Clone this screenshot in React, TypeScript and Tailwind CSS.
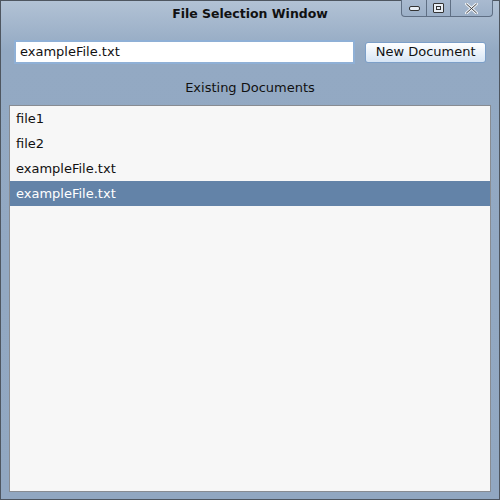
import React from 'react';

const files = ['file1', 'file2', 'exampleFile.txt', 'exampleFile.txt'];

export default function App() {
  const selected = 3;
  return (
    <div className="w-[500px] h-[500px] overflow-hidden" style={{ fontFamily: '"DejaVu Sans", Verdana, sans-serif' }}>
      <div className="w-full h-full flex flex-col border border-[#4e5660] bg-gradient-to-b from-[#b2c2d5] from-0% via-[#93a9c3] via-[10%] to-[#91a7c1]">
        {/* title bar */}
        <div className="relative h-[26px] flex items-center justify-center">
          <span className="text-[12.5px] font-bold text-[#111]">File Selection Window</span>
          <div className="absolute top-[-1px] right-[6px] flex h-[17px] border border-t-0 border-[#5f6f84] rounded-b-[4px] bg-gradient-to-b from-[#a9bad0] to-[#9cb0c8] overflow-hidden">
            <div className="w-[25px] flex items-center justify-center border-r border-[#5f6f84]">
              <div className="w-[11px] h-[5px] border border-[#333] rounded-[2px] bg-[#e8eef5]" />
            </div>
            <div className="w-[24px] flex items-center justify-center border-r border-[#5f6f84]">
              <div className="w-[11px] h-[10px] border border-[#333] rounded-[1px] bg-[#e8eef5] flex items-center justify-center">
                <div className="w-[5px] h-[4px] border border-[#333]" />
              </div>
            </div>
            <div className="w-[41px] flex items-center justify-center">
              <svg width="13" height="11" viewBox="0 0 13 11">
                <path d="M1.5 1 L11.5 10 M11.5 1 L1.5 10" stroke="#eef2f7" strokeWidth="3" strokeLinecap="round" />
                <path d="M1.5 1 L11.5 10 M11.5 1 L1.5 10" stroke="#444" strokeWidth="1" strokeLinecap="round" />
              </svg>
            </div>
          </div>
        </div>

        {/* input row */}
        <div className="flex items-center px-[13px] mt-[13px] gap-[10px]">
          <div className="w-[342px] h-[24px] border-2 border-[#8fb0d6] bg-white flex items-center px-[4px]">
            <span className="text-[13px] text-[#111]">exampleFile.txt</span>
          </div>
          <div className="w-[121px] h-[21px] border border-[#7c9fc8] rounded-[3px] bg-gradient-to-b from-white to-[#d7e5f5] flex items-center justify-center">
            <span className="text-[13px] text-[#111]">New Document</span>
          </div>
        </div>

        <div className="h-[19px] mt-[14px] flex items-center justify-center">
          <span className="text-[13px] text-[#111]">Existing Documents</span>
        </div>

        {/* list */}
        <div className="flex-1 mx-[8px] mt-[8px] mb-[7px] border border-[#888c92] bg-[#f7f7f7] flex flex-col">
          {files.map((f, i) => (
            <div
              key={i}
              className={
                i === selected
                  ? 'h-[25px] flex items-center px-[6px] bg-[#6383a8] text-white'
                  : 'h-[25px] flex items-center px-[6px] text-[#111]'
              }
            >
              <span className="text-[13px]">{f}</span>
            </div>
          ))}
        </div>
      </div>
    </div>
  );
}
